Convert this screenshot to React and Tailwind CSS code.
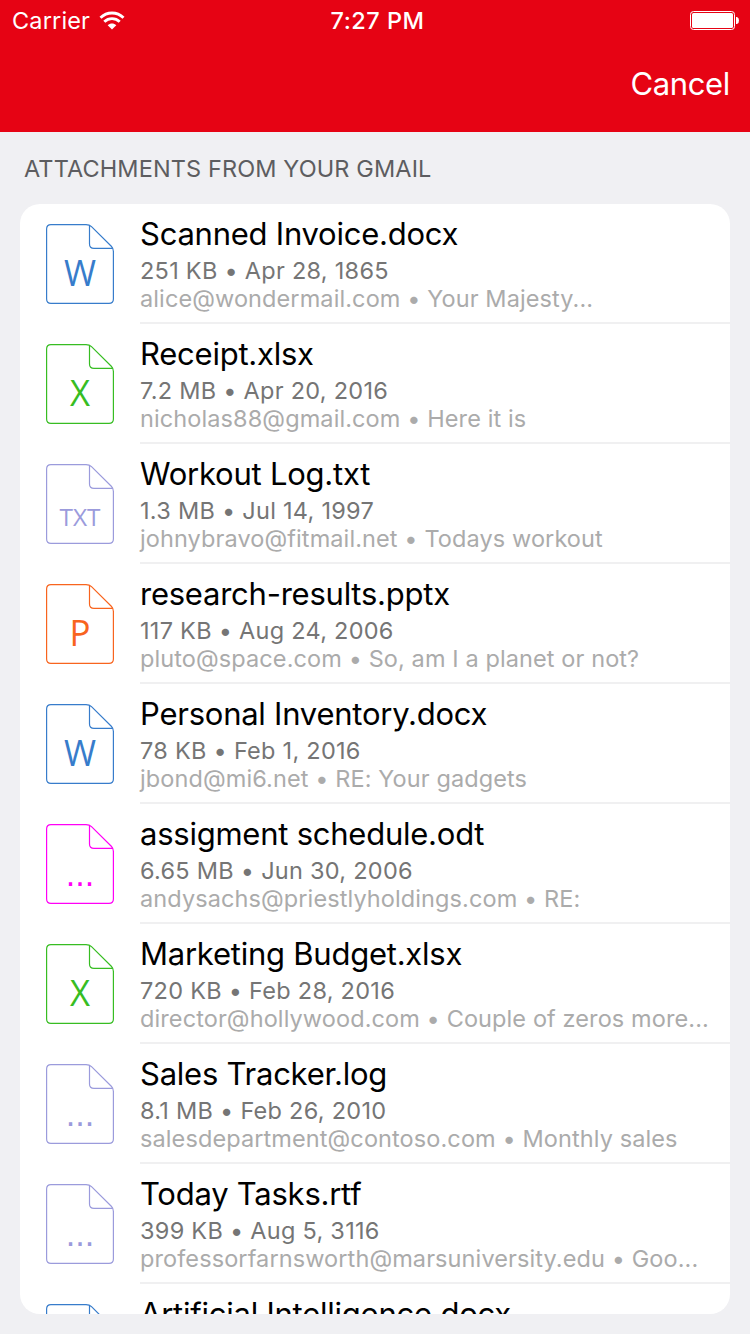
import clsx from "clsx";

const attachments = [
  { name: "Scanned Invoice.docx", meta: "251 KB • Apr 28, 1865", from: "alice@wondermail.com • Your Majesty...", type: "word" },
  { name: "Receipt.xlsx", meta: "7.2 MB • Apr 20, 2016", from: "nicholas88@gmail.com • Here it is", type: "excel" },
  { name: "Workout Log.txt", meta: "1.3 MB • Jul 14, 1997", from: "johnybravo@fitmail.net • Todays workout", type: "text" },
  { name: "research-results.pptx", meta: "117 KB • Aug 24, 2006", from: "pluto@space.com • So, am I a planet or not?", type: "powerpoint" },
  { name: "Personal Inventory.docx", meta: "78 KB • Feb 1, 2016", from: "jbond@mi6.net • RE: Your gadgets", type: "word" },
  { name: "assigment schedule.odt", meta: "6.65 MB • Jun 30, 2006", from: "andysachs@priestlyholdings.com • RE:", type: "odt" },
  { name: "Marketing Budget.xlsx", meta: "720 KB • Feb 28, 2016", from: "director@hollywood.com • Couple of zeros more...", type: "excel" },
  { name: "Sales Tracker.log", meta: "8.1 MB • Feb 26, 2010", from: "salesdepartment@contoso.com • Monthly sales", type: "other" },
  { name: "Today Tasks.rtf", meta: "399 KB • Aug 5, 3116", from: "professorfarnsworth@marsuniversity.edu • Goo...", type: "other" },
  { name: "Artificial Intelligence.docx", meta: "", from: "", type: "word" },
];

// width is the advance of the label inside the 68px sheet
const fileTypes = {
  word: { label: "W", color: "text-[#377ccb]", font: "font-['Open_Sans',sans-serif]", size: 36, width: 32 },
  excel: { label: "X", color: "text-[#37bd22]", font: "font-['Open_Sans',sans-serif]", size: 36, width: 20 },
  text: { label: "TXT", color: "text-[#9b9bdc]", font: "font-['Open_Sans',sans-serif]", size: 24, width: 41 },
  powerpoint: { label: "P", color: "text-[#f8641e]", font: "font-['Open_Sans',sans-serif]", size: 36, width: 21 },
  odt: { label: "...", color: "text-[#ff00f6]", font: "font-['Liberation_Sans',sans-serif]", size: 35, width: 28.5 },
  other: { label: "...", color: "text-[#9b9bdc]", font: "font-['Liberation_Sans',sans-serif]", size: 35, width: 28.5 },
};

const FileIcon = ({ type }) => {
  const { label, color, font, size, width } = fileTypes[type];
  return (
    <svg width="68" height="80" viewBox="0 0 68 80" fill="none" className={clsx("shrink-0", color)}>
      <path
        d="M5 .6H40C42.5 .6 44 1.2 45.5 2.7L65.3 22.3C66.8 23.8 67.4 25.2 67.4 27.5V75C67.4 77.8 65.8 79.4 63 79.4H5C2.2 79.4 .6 77.8 .6 75V5C.6 2.2 2.2 .6 5 .6Z"
        stroke="currentColor"
        strokeWidth="1.2"
      />
      <path d="M43.5 1.4V20C43.5 23 45 24.4 48 24.4H66.8" stroke="currentColor" strokeWidth="1.2" />
      <text
        x="34"
        y="62"
        textAnchor="middle"
        textLength={width}
        lengthAdjust="spacingAndGlyphs"
        fontSize={size}
        fill="currentColor"
        className={font}
      >
        {label}
      </text>
    </svg>
  );
};

const WifiIcon = () => (
  <svg width="26" height="19" viewBox="0 0 26 19" fill="none" stroke="white" strokeWidth="2.9">
    <path d="M1.5 6.7C8 .4 18 .4 24.5 6.7" />
    <path d="M5.3 10.7C9.7 6.6 16.3 6.6 20.7 10.7" />
    <path d="M8.7 14.3C11.3 12 14.7 12 17.3 14.3L13 18.6Z" fill="white" stroke="none" />
  </svg>
);

const BatteryIcon = () => (
  <svg width="50" height="19" viewBox="0 0 50 19" fill="none">
    <rect x=".5" y=".5" width="44" height="18" rx="3" stroke="white" />
    <rect x="2" y="2" width="41" height="15" rx="1.5" fill="white" />
    <path d="M46 6H47Q49 6.5 49 9.5T47 13H46Z" fill="white" />
  </svg>
);

const AttachmentRow = ({ item }) => (
  <li className="flex h-[120px] shrink-0 pl-[26px]">
    <div className="pt-5 pr-[26px]">
      <FileIcon type={item.type} />
    </div>
    <div className="min-w-0 flex-1 border-b-2 border-[#f0f0f1] pt-2.5 whitespace-nowrap">
      <h3 className="text-[31px] leading-10 tracking-[-0.24px] text-black">{item.name}</h3>
      <p className="mt-[3px] text-[23.5px] leading-7 tracking-[0.27px] text-[#757575]">{item.meta}</p>
      <p className="text-[23.5px] leading-7 tracking-[0.1px] text-[#ababab]">{item.from}</p>
    </div>
  </li>
);

const App = () => {
  return (
    <div className="flex h-[1334px] w-[750px] flex-col overflow-hidden bg-[#f0f0f3] font-['Inter',sans-serif]">
      {/* status bar + nav */}
      <header className="h-[132px] shrink-0 bg-[#e60314] text-white">
        <div className="grid h-10 grid-cols-3 items-center pl-3 pr-[10px] text-[23.5px]">
          <div className="flex items-center gap-[9px]">
            <span className="pt-0.5 tracking-[0.15px]">Carrier</span>
            <WifiIcon />
          </div>
          <span className="pt-0.5 pl-[3px] text-center font-medium tracking-[0.5px]">7:27 PM</span>
          <div className="flex justify-end">
            <BatteryIcon />
          </div>
        </div>
        <div className="flex h-[88px] items-center justify-end pr-5">
          <button className="text-[31px] tracking-[-0.35px]">Cancel</button>
        </div>
      </header>

      <h2 className="h-[72px] shrink-0 pl-6 pt-[22px] text-[23.5px] leading-[30px] tracking-[0.12px] text-[#5d5d60]">
        ATTACHMENTS FROM YOUR GMAIL
      </h2>

      {/* list */}
      <ul className="mx-5 flex h-[1110px] flex-col overflow-hidden rounded-[20px] bg-white">
        {attachments.map((item, i) => (
          <AttachmentRow key={i} item={item} />
        ))}
      </ul>
    </div>
  );
};

export default App;
